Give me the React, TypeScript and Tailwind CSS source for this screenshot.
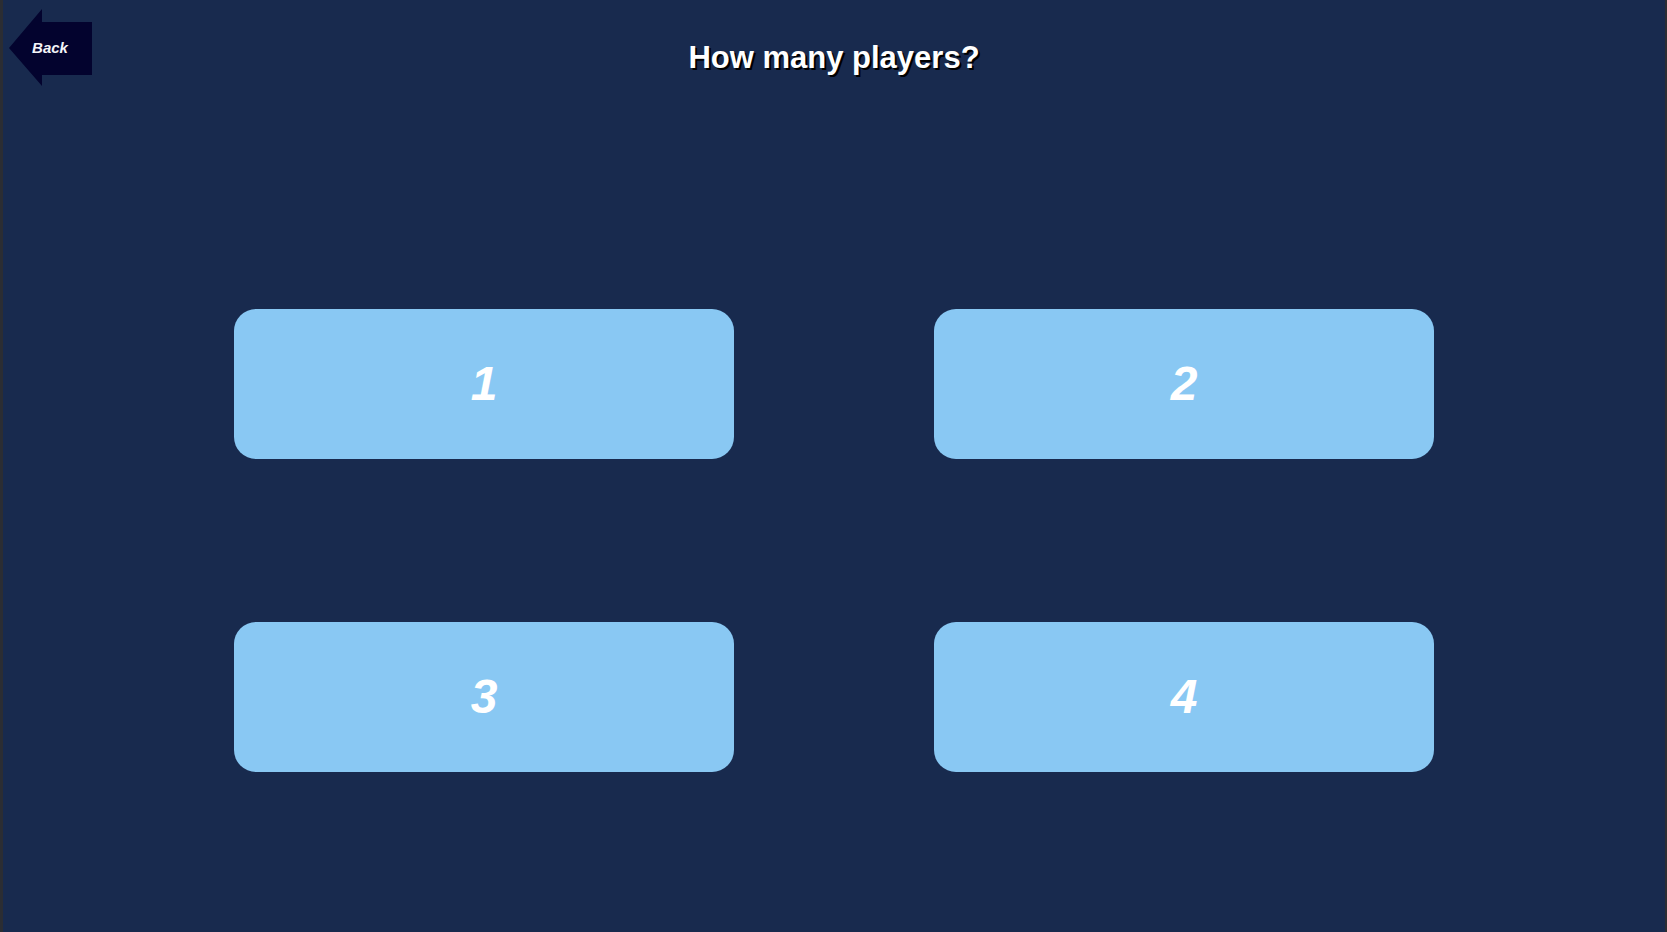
export default function App() {
  const counts = [1, 2, 3, 4];

  return (
    <div className="flex h-[932px] w-full overflow-hidden bg-[#182a4e] font-['Liberation_Sans',Arial,sans-serif]">
      <div className="w-[3px] bg-[#2b2d33]" />

      <main className="flex flex-1 flex-col">
        <header className="mt-[9px] grid h-[77px] grid-cols-[1fr_auto_1fr]">
          <button className="ml-[6px] self-start" onClick={() => console.log('back')}>
            <svg width="83" height="77" viewBox="0 0 83 77">
              <polygon points="0,39 33,0 33,13 83,13 83,66 33,66 33,77" fill="#03032e" />
              <text
                x="41"
                y="44"
                textAnchor="middle"
                fill="#f4f4f8"
                fontSize="15"
                fontWeight="bold"
                fontStyle="italic"
                fontFamily="Liberation Sans, Arial, sans-serif"
              >
                Back
              </text>
            </svg>
          </button>
          <h1 className="mt-[32px] text-[31px] leading-[34px] font-bold text-white [text-shadow:2px_2px_0_#000]">
            How many players?
          </h1>
          <div />
        </header>

        <div className="mt-[223px] grid grid-cols-[500px_500px] justify-center gap-x-[200px] gap-y-[163px]">
          {counts.map((n) => (
            <button
              key={n}
              className="flex h-[150px] items-center justify-center rounded-[22px] bg-[#89c8f3] text-[48px] font-bold italic text-white"
              onClick={() => console.log(`players ${n}`)}
            >
              {n}
            </button>
          ))}
        </div>
      </main>

      <div className="w-[2px] bg-[#2b2d33]" />
    </div>
  );
}
